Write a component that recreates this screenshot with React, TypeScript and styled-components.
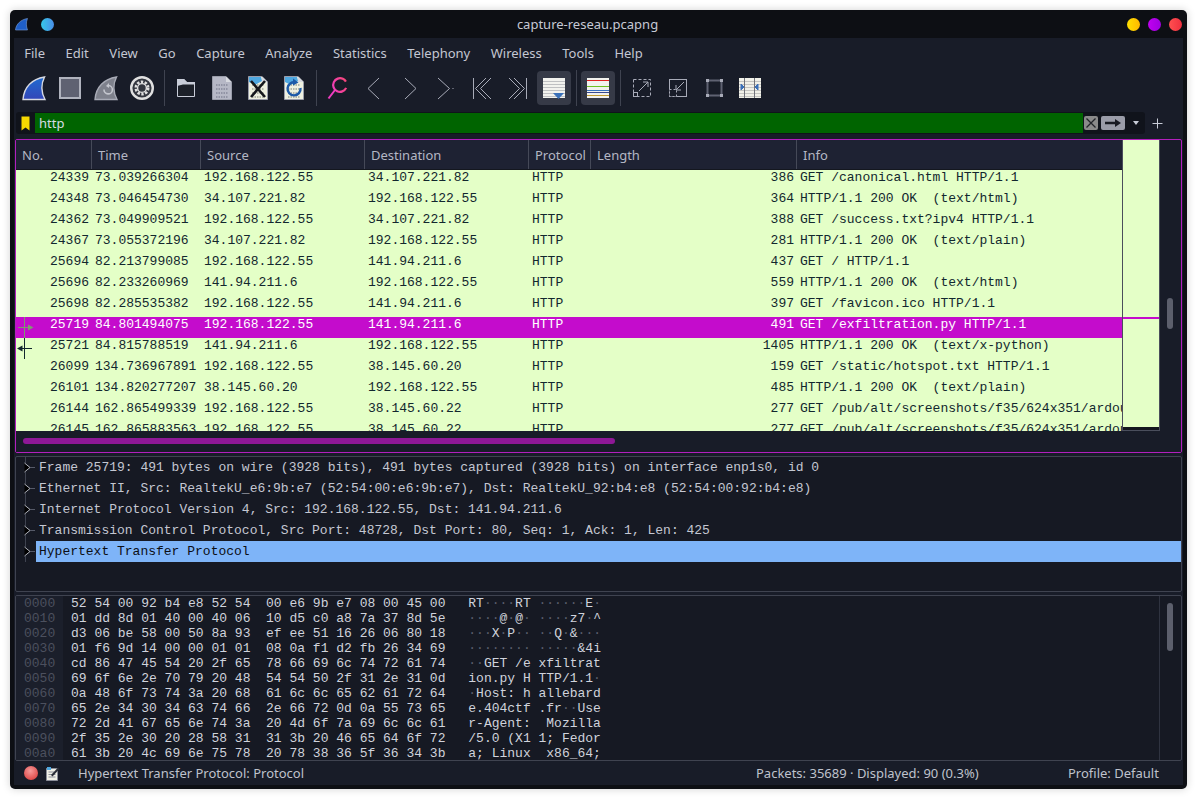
import React from "react";
import styled, { createGlobalStyle } from "styled-components";

const Global = createGlobalStyle`
  html, body { margin: 0; padding: 0; background: #ffffff; }
  #root { width: 1197px; height: 799px; overflow: hidden; }
`;
const UI = `"Noto Sans", "Open Sans", sans-serif`;
const MONO = `"Liberation Mono", monospace`;

const Page = styled.div`padding: 10px;`;
const Win = styled.div`
  width: 1177px; height: 779px; box-sizing: border-box;
  display: flex; flex-direction: column;
  background: #0d0f14; border-radius: 5px;
  padding: 0 4px 4px;
  box-shadow: 0 0 8px rgba(0,0,0,.18);
  font-family: ${UI}; font-size: 13px; color: #c4c7d2;
`;
const TitleBar = styled.div`
  height: 28px; flex: none; display: flex; align-items: center; position: relative;
  margin: 0 -4px; padding: 0 5px;
`;
const TitleText = styled.div`flex: 1; text-align: center; color: #c6c9d4; padding-right: 22px;`;
const TitleLeft = styled.div`display: flex; align-items: center; gap: 13px; width: 120px;`;
const TitleRight = styled.div`display: flex; align-items: center; justify-content: flex-end; gap: 8px; width: 120px;`;
const Dot = styled.span<{ $from: string; $to: string }>`
  width: 13px; height: 13px; border-radius: 50%;
  background: linear-gradient(90deg, ${p => p.$from}, ${p => p.$to});
`;
const Inner = styled.div`flex: 1; background: #181c28; display: flex; flex-direction: column; min-height: 0;`;
const MenuBar = styled.div`height: 30px; flex: none; display: flex; align-items: center;`;
const MenuItem = styled.div`padding: 0 10.25px; color: #c4c7d2;`;
const Toolbar = styled.div`height: 40px; flex: none; box-sizing: border-box; padding: 3px 0 3px 3px; display: flex; gap: 2px;`;
const ToolBtn = styled.div<{ $active?: boolean }>`
  width: 34px; height: 34px; border-radius: 4px; flex: none;
  background: ${p => (p.$active ? "#363a47" : "transparent")};
  svg { display: block; }
`;
const ToolSep = styled.div`width: 1px; height: 36px; margin: -1px 2px 0 3px; background: #3f4350; flex: none;`;
const FilterRow = styled.div`height: 22px; margin-top: 4px; flex: none; display: flex; align-items: center; padding-left: 2px;`;
const FilterBox = styled.div`
  width: 1129px; height: 22px; box-sizing: border-box; display: flex; align-items: center;
  background: #10131b; border-radius: 3px;
`;
const BookmarkSlot = styled.div`width: 19px; display: flex; justify-content: center; flex: none;`;
const FilterInput = styled.div`
  width: 1048px; height: 20px; background: #006400; color: #d8dce4; flex: none;
  padding-left: 4px; box-sizing: border-box; line-height: 20px; font-size: 13px;
`;
const ClearBtn = styled.div`width: 14px; height: 14px; margin-left: 1px; background: #8a8a8a; border-radius: 2px; flex: none; svg { display: block; }`;
const ApplyBtn = styled.div`width: 24px; height: 14px; margin-left: 3px; background: #9a9ca8; border-radius: 2px; flex: none; svg { display: block; }`;
const Caret = styled.div`
  width: 0; height: 0; margin-left: 8px; flex: none;
  border-left: 3.5px solid transparent; border-right: 3.5px solid transparent; border-top: 4px solid #c8ccd8;
`;
const Plus = styled.div`margin-left: 7px; svg { display: block; }`;

const COLS = "76px 109px 164px 164px 62px 206px 325px";
const PacketPanel = styled.div`
  margin: 5px 1px 0; height: 314px; box-sizing: border-box; flex: none;
  border: 1px solid #b21fbd; border-radius: 2px;
  display: grid; grid-template-columns: 1106px 38px 1fr; grid-template-rows: 30px 261px 21px;
  background: #181c28;
`;
const Header = styled.div`
  grid-column: 1; grid-row: 1; display: grid; grid-template-columns: ${COLS}; background: #1e2233;
  border-bottom: 1px solid #14171f; box-sizing: border-box;
`;
const HeadCell = styled.div`
  padding-left: 6px; line-height: 31px; color: #b4b7c4; border-right: 1px solid #454958;
  overflow: hidden; white-space: nowrap;
  &:last-child { border-right: 0; }
`;
const Rows = styled.div`grid-column: 1; grid-row: 2; overflow: hidden; background: #e4ffc7; position: relative;`;
const Row = styled.div<{ $sel?: boolean }>`
  display: grid; grid-template-columns: ${COLS}; height: 21px; box-sizing: border-box;
  font: 13px/15px ${MONO};
  background: ${p => (p.$sel ? "#c40ccc" : "#e4ffc7")};
  color: ${p => (p.$sel ? "#ffffff" : "#12272e")};
`;
const Cell = styled.div<{ $right?: boolean }>`
  padding: 0 3px; white-space: pre; overflow: hidden;
  text-align: ${p => (p.$right ? "right" : "left")};
  &:last-child { padding-right: 0; }
`;
const RelMarks = styled.svg`position: absolute; left: 0; top: 147px; pointer-events: none;`;
const MiniMap = styled.div`
  grid-column: 2; grid-row: 1 / 3; background: #e4ffc7; border-left: 1px solid #4a4e5c; border-right: 1px solid #4a4e5c;
  position: relative; box-sizing: border-box;
`;
const MiniSel = styled.div`position: absolute; left: 0; right: 0; top: 177px; height: 2px; background: #c40ccc;`;
const MiniEnd = styled.div`position: absolute; left: 0; right: 0; bottom: 0; height: 4px; background: #14171f; border-bottom: 1px solid #4a4e5c; box-sizing: border-box;`;
const VScroll = styled.div`grid-column: 3; grid-row: 1 / 3; position: relative;`;
const VThumb = styled.div<{ $top: number; $h: number }>`
  position: absolute; left: 7px; width: 6px; top: ${p => p.$top}px; height: ${p => p.$h}px;
  border-radius: 3px; background: #5c5f6c;
`;
const HScroll = styled.div`grid-column: 1 / 4; grid-row: 3; padding: 7px 0 0 7px; box-sizing: border-box; background: #181c28;`;
const HThumb = styled.div`width: 592px; height: 6px; border-radius: 3px; background: #8e1896;`;

const DetailPanel = styled.div`
  margin: 3px 1px 0; height: 136px; box-sizing: border-box; flex: none;
  border: 1px solid #3f4350; border-radius: 2px; background: #161923; overflow: hidden;
`;
const TreeRow = styled.div`display: flex; height: 21px; position: relative; font: 13px/21px ${MONO}; color: #c4c7d2;`;
const TreeMark = styled.svg`flex: none; display: block;`;
const TreeText = styled.div<{ $sel?: boolean }>`
  flex: 1; padding-left: 3px; white-space: pre;
  background: ${p => (p.$sel ? "#7eb4f8" : "transparent")};
  color: ${p => (p.$sel ? "#0c0e14" : "#c4c7d2")};
`;

const HexPanel = styled.div`
  margin: 3px 1px 0; height: 166px; box-sizing: border-box; flex: none;
  border: 1px solid #3f4350; border-radius: 2px; background: #161923;
  display: flex; position: relative; overflow: hidden;
`;
const OffsetCol = styled.div`
  width: 47px; flex: none; padding-left: 8px; box-sizing: border-box; background: #1b1f2b;
  font: 13px/15px ${MONO}; color: #4c505e;
`;
const HexBody = styled.div`flex: 1; padding-left: 8px; font: 13px/15px ${MONO}; color: #d0d3dc; white-space: pre;`;
const HexAscii = styled.span`margin-left: -0.6px;`;
const HexDot = styled.span`color: #5a5e6c;`;
const HexScroll = styled.div`width: 21px; flex: none; border-left: 1px solid #2f3340; position: relative;`;

const StatusBar = styled.div`flex: 1; display: flex; align-items: center; min-height: 0; color: #bfc2cc;`;
const StatusLed = styled.div`
  width: 14px; height: 14px; border-radius: 50%; margin-left: 10px; flex: none;
  background: radial-gradient(circle at 45% 35%, #f59a9a, #e0504f 70%);
`;
const StatusNote = styled.div`margin-left: 8px; width: 14px; flex: none; svg { display: block; }`;
const StatusMsg = styled.div`margin-left: 18px; width: 678px; flex: none;`;
const StatusPackets = styled.div`width: 312px; flex: none;`;
const StatusProfile = styled.div`flex: none;`;

const Svg: React.FC<{ children: React.ReactNode }> = ({ children }) => (
  <svg width="34" height="34" viewBox="0 0 34 34" fill="none">{children}</svg>
);
const FIN = "M6 28.5C7 16 15 8 27.5 6C24 13 24 21 28 28.5Z";
const LINE = "#a8abb8";

const Doc = ({ children, fill = "#eef0e0" }: { children?: React.ReactNode; fill?: string }) => (
  <>
    <path d="M7.5 5.5H21L26.5 11V28.5H7.5Z" fill={fill} stroke="#9a9daa" />
    <path d="M21 5.5V11H26.5Z" fill="#d8dae0" />
    {children}
  </>
);
const DocTop = () => <path d="M8 6H20L21 10L14 14L8 11Z" fill="#4fa8e0" />;
const Bits = ({ color }: { color: string }) => (
  <g stroke={color} strokeWidth="1.4" strokeDasharray="1.5 1">
    <path d="M11 14H23M11 18H23M11 22H23M11 26H23" />
  </g>
);

const icons: Array<React.ReactNode | "sep" | { active: React.ReactNode }> = [
  <Svg><defs><linearGradient id="fb" x1="0" y1="0" x2="0" y2="1"><stop offset="0" stopColor="#1f6bd0" /><stop offset="1" stopColor="#3346b8" /></linearGradient></defs><path d={FIN} fill="url(#fb)" stroke="#d8dae2" strokeWidth="1.4" /></Svg>,
  <Svg><rect x="7" y="7" width="20" height="20" fill="#5f6272" stroke="#b0b3be" strokeWidth="2" /></Svg>,
  <Svg><path d={FIN} fill="#7e818c" stroke="#a8abb6" strokeWidth="1.4" /><path d="M15 18.5a4.2 4.2 0 1 0 4.5-4" stroke="#c4c6ce" strokeWidth="1.6" /><path d="M20 12v5l-3-2z" fill="#c4c6ce" /></Svg>,
  <Svg><circle cx="17" cy="17" r="10.8" fill="#33363f" stroke="#e0e0e0" strokeWidth="2.4" /><circle cx="17" cy="17" r="6.2" stroke="#e0e0e0" strokeWidth="2.6" strokeDasharray="2.4 1.5" /><circle cx="17" cy="17" r="4.4" stroke="#e0e0e0" strokeWidth="1.4" /></Svg>,
  "sep",
  <Svg><path d="M8 8H15L18 11H26V14H8Z" fill="#c8ccd8" /><path d="M8.5 12.5H25.5V25.5H8.5Z" fill="#1c2029" stroke="#c8ccd8" /><path d="M8 8H15L18 11H26V13.5H14L8 15Z" fill="#c8ccd8" /></Svg>,
  <Svg><Doc fill="#b6b8c6"><Bits color="#85879a" /></Doc></Svg>,
  <Svg><Doc><DocTop /><Bits color="#a0a296" /><path d="M10 10L24 26M24 10L10 26" stroke="#15171c" strokeWidth="2.6" /></Doc></Svg>,
  <Svg><Doc><DocTop /><Bits color="#a0a296" /><path d="M18.5 11.5a6.5 6.5 0 1 0 5 5.5" stroke="#1d5aa8" strokeWidth="2.4" /><path d="M16 7.5L21.5 11.5L16 14.5Z" fill="#1d5aa8" /></Doc></Svg>,
  "sep",
  <Svg><defs><linearGradient id="pk" x1="0" y1="1" x2="1" y2="0"><stop offset="0" stopColor="#f03cc0" /><stop offset="1" stopColor="#f84870" /></linearGradient></defs><circle cx="19" cy="14" r="6.8" stroke="url(#pk)" strokeWidth="2.2" strokeDasharray="36 7" transform="rotate(25 19 14)" /><path d="M14 19L7.5 27.5" stroke="#f03cc0" strokeWidth="2" /></Svg>,
  <Svg><path d="M22 7L11 17.5L22 28" stroke={LINE} /></Svg>,
  <Svg><path d="M12 7L23 17.5L12 28" stroke={LINE} /></Svg>,
  <Svg><path d="M9 7L20.5 17.5L9 28" stroke={LINE} /><rect x="23.5" y="17" width="1" height="1" fill={LINE} /></Svg>,
  <Svg><path d="M8.5 7V28M21 7L10.5 17.5L21 28M26 7L15.5 17.5L26 28" stroke={LINE} /></Svg>,
  <Svg><path d="M25.5 7V28M8 7L18.5 17.5L8 28M13 7L23.5 17.5L13 28" stroke={LINE} /></Svg>,
  { active: <Svg><rect x="6" y="7" width="22" height="20" fill="#f2f2ee" /><path d="M6 10.5H28M6 13.5H28M6 16.5H28M6 19.5H28M6 22.5H28M6 25.5H28" stroke="#bfc0c2" /><path d="M16 22H27L21.5 28Z" fill="#3a70b8" /></Svg> },
  "sep",
  { active: <Svg><rect x="6" y="7" width="22" height="20" fill="#f2f2ee" /><path d="M6 9.5H28" stroke="#e02020" /><path d="M6 15.5H28" stroke="#6fc020" /><path d="M6 19.5H28" stroke="#3a70c0" /><path d="M6 21.5H28" stroke="#3a4a90" /><path d="M6 24.5H28" stroke="#c09a30" /></Svg> },
  "sep",
  <Svg><rect x="8.5" y="8.5" width="17" height="17" stroke={LINE} strokeDasharray="3 2" /><rect x="8.5" y="21.5" width="4" height="4" fill="#181c28" stroke={LINE} /><path d="M14 20L23 11M18 11H23V16" stroke={LINE} /></Svg>,
  <Svg><rect x="8.5" y="8.5" width="17" height="17" stroke={LINE} /><rect x="8.5" y="18.5" width="7" height="7" fill="#181c28" stroke={LINE} strokeDasharray="2 2" /><path d="M23 11L15 19M15 14V19H20" stroke={LINE} /></Svg>,
  <Svg><rect x="10.5" y="9.5" width="14" height="15" stroke="#5f6272" strokeWidth="2" /><g fill="#a8abb8"><rect x="9" y="8" width="3" height="3" /><rect x="23" y="8" width="3" height="3" /><rect x="9" y="23" width="3" height="3" /><rect x="23" y="23" width="3" height="3" /></g></Svg>,
  <Svg><rect x="6" y="7" width="22" height="20" fill="#f0f0e8" /><path d="M6 10.5H28M6 13.5H28M6 16.5H28M6 19.5H28M6 22.5H28M6 25.5H28" stroke="#c4c4c0" /><path d="M11.5 7V27M21.5 7V27" stroke="#70727a" /><path d="M8 13L11 16L8 19ZM25 13L22 16L25 19Z" fill="#3a70b8" stroke="#3a70b8" /></Svg>,
];

const menus = ["File", "Edit", "View", "Go", "Capture", "Analyze", "Statistics", "Telephony", "Wireless", "Tools", "Help"];
const heads = ["No.", "Time", "Source", "Destination", "Protocol", "Length", "Info"];
const L = "192.168.122.55";
const packets: string[][] = [
  ["24339", "73.039266304", L, "34.107.221.82", "386", "GET /canonical.html HTTP/1.1"],
  ["24348", "73.046454730", "34.107.221.82", L, "364", "HTTP/1.1 200 OK  (text/html)"],
  ["24362", "73.049909521", L, "34.107.221.82", "388", "GET /success.txt?ipv4 HTTP/1.1"],
  ["24367", "73.055372196", "34.107.221.82", L, "281", "HTTP/1.1 200 OK  (text/plain)"],
  ["25694", "82.213799085", L, "141.94.211.6", "437", "GET / HTTP/1.1"],
  ["25696", "82.233260969", "141.94.211.6", L, "559", "HTTP/1.1 200 OK  (text/html)"],
  ["25698", "82.285535382", L, "141.94.211.6", "397", "GET /favicon.ico HTTP/1.1"],
  ["25719", "84.801494075", L, "141.94.211.6", "491", "GET /exfiltration.py HTTP/1.1"],
  ["25721", "84.815788519", "141.94.211.6", L, "1405", "HTTP/1.1 200 OK  (text/x-python)"],
  ["26099", "134.736967891", L, "38.145.60.20", "159", "GET /static/hotspot.txt HTTP/1.1"],
  ["26101", "134.820277207", "38.145.60.20", L, "485", "HTTP/1.1 200 OK  (text/plain)"],
  ["26144", "162.865499339", L, "38.145.60.22", "277", "GET /pub/alt/screenshots/f35/624x351/ardour.png HTTP/1.1"],
  ["26145", "162.865883563", L, "38.145.60.22", "277", "GET /pub/alt/screenshots/f35/624x351/ardour.png HTTP/1.1"],
];
const tree = [
  "Frame 25719: 491 bytes on wire (3928 bits), 491 bytes captured (3928 bits) on interface enp1s0, id 0",
  "Ethernet II, Src: RealtekU_e6:9b:e7 (52:54:00:e6:9b:e7), Dst: RealtekU_92:b4:e8 (52:54:00:92:b4:e8)",
  "Internet Protocol Version 4, Src: 192.168.122.55, Dst: 141.94.211.6",
  "Transmission Control Protocol, Src Port: 48728, Dst Port: 80, Seq: 1, Ack: 1, Len: 425",
  "Hypertext Transfer Protocol",
];
const hex: [string, string, string][] = [
  ["0000", "52 54 00 92 b4 e8 52 54  00 e6 9b e7 08 00 45 00", "RT····RT ······E·"],
  ["0010", "01 dd 8d 01 40 00 40 06  10 d5 c0 a8 7a 37 8d 5e", "····@·@· ····z7·^"],
  ["0020", "d3 06 be 58 00 50 8a 93  ef ee 51 16 26 06 80 18", "···X·P·· ··Q·&···"],
  ["0030", "01 f6 9d 14 00 00 01 01  08 0a f1 d2 fb 26 34 69", "········ ·····&4i"],
  ["0040", "cd 86 47 45 54 20 2f 65  78 66 69 6c 74 72 61 74", "··GET /e xfiltrat"],
  ["0050", "69 6f 6e 2e 70 79 20 48  54 54 50 2f 31 2e 31 0d", "ion.py H TTP/1.1·"],
  ["0060", "0a 48 6f 73 74 3a 20 68  61 6c 6c 65 62 61 72 64", "·Host: h allebard"],
  ["0070", "65 2e 34 30 34 63 74 66  2e 66 72 0d 0a 55 73 65", "e.404ctf .fr··Use"],
  ["0080", "72 2d 41 67 65 6e 74 3a  20 4d 6f 7a 69 6c 6c 61", "r-Agent:  Mozilla"],
  ["0090", "2f 35 2e 30 20 28 58 31  31 3b 20 46 65 64 6f 72", "/5.0 (X1 1; Fedor"],
  ["00a0", "61 3b 20 4c 69 6e 75 78  20 78 38 36 5f 36 34 3b", "a; Linux  x86_64;"],
];

const Ascii = ({ text }: { text: string }) => (
  <HexAscii>{text.split(/(·+)/).map((s, i) => (s.startsWith("·") ? <HexDot key={i}>{s}</HexDot> : s))}</HexAscii>
);

export default function App() {
  return (
    <Page>
      <Global />
      <Win>
        <TitleBar>
          <TitleLeft>
            <svg width="13" height="13" viewBox="0 0 13 13"><path d="M0.5 12C1 6 6 1.5 12.5 0.5C11 4 11 8 12.5 12Z" fill="#1f5fc8" stroke="#7aa0d8" strokeWidth=".6" /></svg>
            <Dot $from="#36c8e8" $to="#4a8ee8" />
          </TitleLeft>
          <TitleText>capture-reseau.pcapng</TitleText>
          <TitleRight>
            <Dot $from="#ffe000" $to="#ffb800" />
            <Dot $from="#c000f0" $to="#a000e0" />
            <Dot $from="#ff5050" $to="#f03040" />
          </TitleRight>
        </TitleBar>
        <Inner>
          <MenuBar>{menus.map(m => <MenuItem key={m}>{m}</MenuItem>)}</MenuBar>
          <Toolbar>
            {icons.map((ic, i) => {
              if (ic === "sep") return <ToolSep key={i} />;
              if (ic && typeof ic === "object" && "active" in ic) return <ToolBtn key={i} $active>{ic.active}</ToolBtn>;
              return <ToolBtn key={i}>{ic as React.ReactNode}</ToolBtn>;
            })}
          </Toolbar>
          <FilterRow>
            <FilterBox>
              <BookmarkSlot>
                <svg width="9" height="15" viewBox="0 0 9 15"><path d="M0.5 0.5H8.5V14.5L4.5 11.5L0.5 14.5Z" fill="#f5d800" /></svg>
              </BookmarkSlot>
              <FilterInput>http</FilterInput>
              <ClearBtn><svg width="14" height="14" viewBox="0 0 14 14"><path d="M2.5 2.5L11.5 11.5M11.5 2.5L2.5 11.5" stroke="#22242a" strokeWidth="1.3" /></svg></ClearBtn>
              <ApplyBtn><svg width="24" height="14" viewBox="0 0 24 14"><path d="M4 5.7H14V3L20 7L14 11V8.3H4Z" fill="#181a22" /></svg></ApplyBtn>
              <Caret />
            </FilterBox>
            <Plus><svg width="11" height="11" viewBox="0 0 11 11"><path d="M5.5 0.5V10.5M0.5 5.5H10.5" stroke="#c8ccd8" /></svg></Plus>
          </FilterRow>

          <PacketPanel>
            <Header>{heads.map(h => <HeadCell key={h}>{h}</HeadCell>)}</Header>
            <Rows>
              {packets.map(p => (
                <Row key={p[0]} $sel={p[0] === "25719"}>
                  <Cell $right>{p[0]}</Cell>
                  <Cell>{p[1]}</Cell>
                  <Cell>{p[2]}</Cell>
                  <Cell>{p[3]}</Cell>
                  <Cell>HTTP</Cell>
                  <Cell $right>{p[4]}</Cell>
                  <Cell>{p[5]}</Cell>
                </Row>
              ))}
              <RelMarks width="24" height="42" viewBox="0 0 24 42">
                <path d="M8.5 0V21M2 10.5H13" stroke="#7f9a70" />
                <path d="M12 7.5L17.5 10.5L12 13.5Z" fill="#7f9a70" />
                <path d="M8.5 21V42M6 31.5H16" stroke="#12272e" />
                <path d="M6.5 28.5L1 31.5L6.5 34.5Z" fill="#12272e" />
              </RelMarks>
            </Rows>
            <MiniMap><MiniSel /><MiniEnd /></MiniMap>
            <VScroll><VThumb $top={158} $h={31} /></VScroll>
            <HScroll><HThumb /></HScroll>
          </PacketPanel>

          <DetailPanel>
            {tree.map((t, i) => (
              <TreeRow key={t}>
                <TreeMark width="20" height="21" viewBox="0 0 20 21">
                  <path d="M9.5 0V6M9.5 15V21" stroke="#3f4350" />
                  <path d="M14 10.5H19" stroke="#565a68" />
                  <path d="M8.5 6L14 10.5L8.5 15" stroke="#b0b3bc" />
                </TreeMark>
                <TreeText $sel={i === 4}>{t}</TreeText>
              </TreeRow>
            ))}
          </DetailPanel>

          <HexPanel>
            <OffsetCol>{hex.map(h => <div key={h[0]}>{h[0]}</div>)}</OffsetCol>
            <HexBody>
              {hex.map(h => <div key={h[0]}>{h[1]}{"   "}<Ascii text={h[2]} /></div>)}
            </HexBody>
            <HexScroll><VThumb $top={7} $h={48} /></HexScroll>
          </HexPanel>

          <StatusBar>
            <StatusLed />
            <StatusNote>
              <svg width="14" height="15" viewBox="0 0 14 15"><path d="M0.5 2.5H11.5V14.5H0.5Z" fill="#f0f0e6" stroke="#8a8d98" /><path d="M2.5 6H8M2.5 8.5H9.5M2.5 11H9.5" stroke="#8a8d98" /><path d="M5 9L12 1.5L13.5 3L6.5 10.5Z" fill="#2a2d36" /><path d="M1 1h4v3H1z" fill="#4fa8e0" /></svg>
            </StatusNote>
            <StatusMsg>Hypertext Transfer Protocol: Protocol</StatusMsg>
            <StatusPackets>Packets: 35689 · Displayed: 90 (0.3%)</StatusPackets>
            <StatusProfile>Profile: Default</StatusProfile>
          </StatusBar>
        </Inner>
      </Win>
    </Page>
  );
}
